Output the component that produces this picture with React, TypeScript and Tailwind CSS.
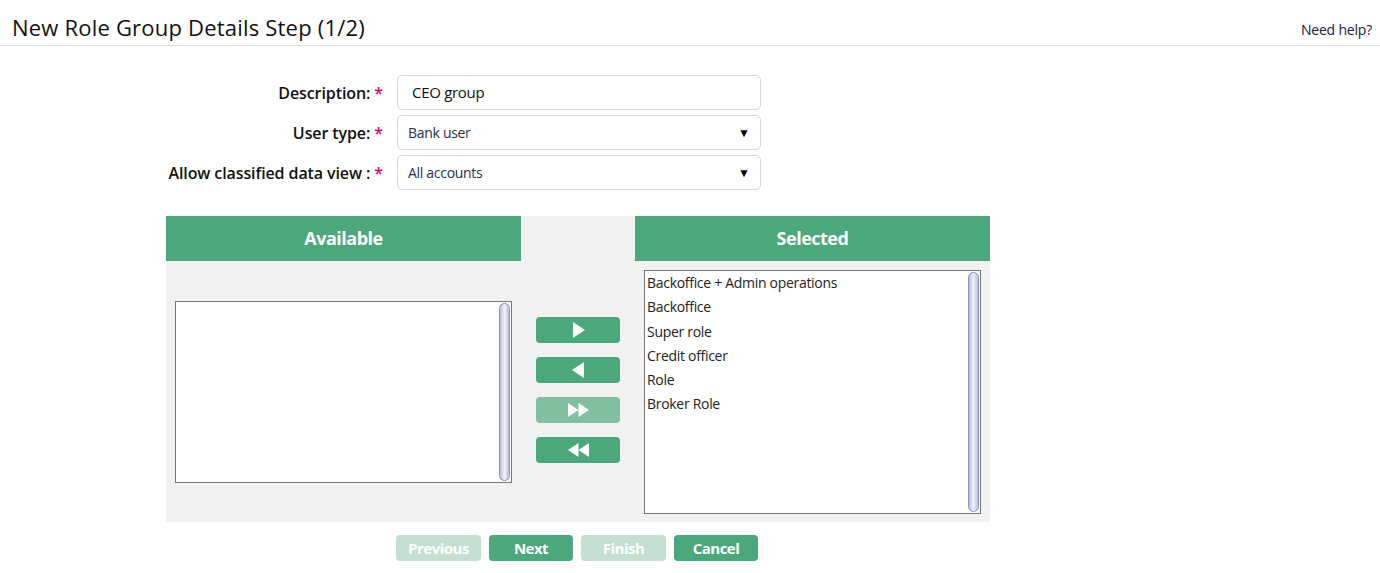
import React from "react";

const font = { fontFamily: "'Open Sans', 'Noto Sans', sans-serif" };

function Thumb({ h }: { h: string }) {
  return (
    <div className={`absolute right-[1px] top-[1px] w-[11px] ${h} rounded-full border border-[#8a8fb8] bg-gradient-to-r from-[#b9bde0] via-[#f2f3fb] to-[#b9bde0]`} />
  );
}

function ArrowBtn({ children, disabled }: { children: React.ReactNode; disabled?: boolean }) {
  return (
    <div className={`w-[84px] h-[26px] rounded-[4px] flex items-center justify-center ${disabled ? "bg-[#80c0a0]" : "bg-[#4ba87b]"}`}>
      {children}
    </div>
  );
}

export default function App() {
  const selected = ["Backoffice + Admin operations", "Backoffice", "Super role", "Credit officer", "Role", "Broker Role"];
  return (
    <div className="w-[1380px] h-[573px] bg-white text-[#111]" style={font}>
      <div className="h-[46px] border-b border-[#dcdcdc] flex items-end justify-between pl-[12px] pr-[8px] pb-[3px]">
        <div className="text-[22px] leading-[30px] font-medium text-[#111] tracking-[0.2px]">New Role Group Details Step (1/2)</div>
        <div className="text-[14px] leading-[20px] text-[#1a1a40] mb-[2px] tracking-[-0.2px]">Need help?</div>
      </div>

      <div className="mt-[29px] flex flex-col gap-[5px]">
        {[
          { label: "Description:", value: "CEO group", select: false },
          { label: "User type:", value: "Bank user", select: true },
          { label: "Allow classified data view :", value: "All accounts", select: true },
        ].map((r) => (
          <div key={r.label} className="flex items-center h-[35px]">
            <div className="w-[384px] text-right text-[16px] font-semibold tracking-[-0.1px] text-[#111] pr-[1px]">
              {r.label} <span className="text-[#e0007a]">*</span>
            </div>
            <div className="ml-[13px] w-[364px] h-[35px] border border-[#d6d6d6] rounded-[5px] flex items-center justify-between pr-[10px]">
              <span className={`${r.select ? "pl-[10px] text-[#2a2f4a] text-[14px]" : "pl-[14px] text-[#111] text-[15px]"} tracking-[-0.3px]`}>{r.value}</span>
              {r.select && <span className="text-[12px] text-black">▼</span>}
            </div>
          </div>
        ))}
      </div>

      <div className="ml-[166px] mt-[26px] w-[824px] h-[306px] bg-[#f1f1f1] flex">
        <div className="w-[355px] flex flex-col">
          <div className="h-[45px] bg-[#4ba87b] text-white text-[18px] font-bold flex items-center justify-center tracking-[-0.5px]">Available</div>
          <div className="ml-[9px] mt-[40px] relative w-[337px] h-[182px] bg-white border border-[#767676]">
            <Thumb h="h-[178px]" />
          </div>
        </div>
        <div className="w-[114px] flex flex-col items-center pt-[101px] gap-[14px]">
          <ArrowBtn>
            <svg width="13" height="16" viewBox="0 0 13 16"><path d="M1 0 L13 8 L1 16 Z" fill="white" /></svg>
          </ArrowBtn>
          <ArrowBtn>
            <svg width="13" height="16" viewBox="0 0 13 16"><path d="M12 0 L0 8 L12 16 Z" fill="white" /></svg>
          </ArrowBtn>
          <ArrowBtn disabled>
            <svg width="21" height="14" viewBox="0 0 21 14"><path d="M0 0 L10.5 7 L0 14 Z M10.5 0 L21 7 L10.5 14 Z" fill="white" /></svg>
          </ArrowBtn>
          <ArrowBtn>
            <svg width="21" height="14" viewBox="0 0 21 14"><path d="M10.5 0 L0 7 L10.5 14 Z M21 0 L10.5 7 L21 14 Z" fill="white" /></svg>
          </ArrowBtn>
        </div>
        <div className="w-[355px] flex flex-col">
          <div className="h-[45px] bg-[#4ba87b] text-white text-[18px] font-bold flex items-center justify-center tracking-[-0.5px]">Selected</div>
          <div className="ml-[9px] mt-[9px] relative w-[337px] h-[244px] bg-white border border-[#767676] pl-[2px]">
            {selected.map((s) => (
              <div key={s} className="h-[24.3px] leading-[24px] text-[14px] text-[#222] tracking-[-0.3px]">{s}</div>
            ))}
            <Thumb h="h-[240px]" />
          </div>
        </div>
      </div>

      <div className="mt-[13px] ml-[396px] flex gap-[8px] text-white text-[15px] font-bold tracking-[-0.5px]">
        <div className="w-[85px] h-[26px] rounded-[4px] bg-[#c3e0d2] flex items-center justify-center">Previous</div>
        <div className="w-[84px] h-[26px] rounded-[4px] bg-[#4ba87b] flex items-center justify-center">Next</div>
        <div className="w-[85px] h-[26px] rounded-[4px] bg-[#c3e0d2] flex items-center justify-center">Finish</div>
        <div className="w-[84px] h-[26px] rounded-[4px] bg-[#4ba87b] flex items-center justify-center">Cancel</div>
      </div>
    </div>
  );
}
